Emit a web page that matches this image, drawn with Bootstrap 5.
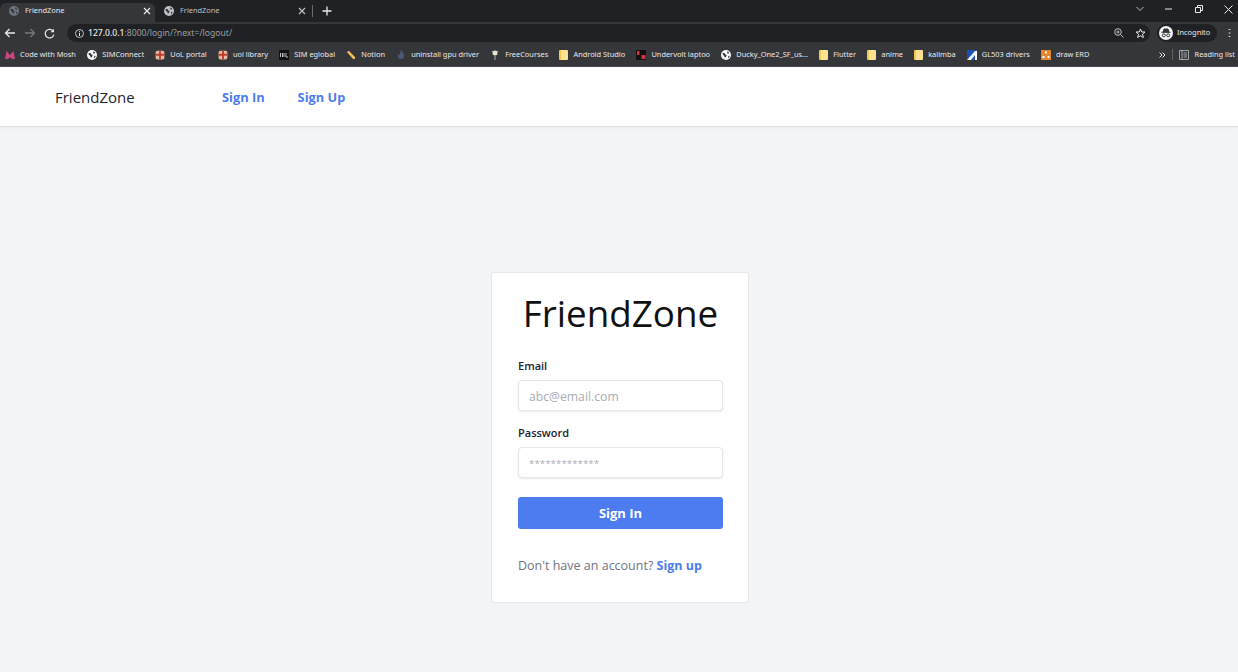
<!DOCTYPE html>
<html lang="en">
<head>
<meta charset="UTF-8">
<meta name="viewport" content="width=device-width, initial-scale=1.0">
<title>FriendZone</title>
<link href="https://cdn.jsdelivr.net/npm/bootstrap@5.3.0/dist/css/bootstrap.min.css" rel="stylesheet">
<style>
body { background: #f3f4f6; font-family: "Open Sans", "Noto Sans", sans-serif; overflow: hidden; height: 672px; }
svg { display: block; flex: none; }

/* browser frame */
.br-frame { background: #35363a; color: #e8eaed; font-family: "Noto Sans", sans-serif; font-size: 7.4px; height: 67px; border-bottom: 1px solid #4a4b4e; }
.br-tabs { background: #202124; height: 22px; padding-top: 3px; }
.br-tab { width: 155px; height: 19px; padding: 0 4px 3px 9px; color: #e8eaed; }
.br-tab-on { background: #35363a; border-radius: 6px 6px 0 0; }
.br-tab-off { color: #bdc1c6; }
.br-tab-name { margin-left: 6px; flex: 1; }
.br-newtab { padding-bottom: 3px; }
.br-sep { width: 1px; height: 12px; background: #6a6b6e; margin: 0 9px 0 2px; }
.br-win { width: 102px; height: 19px; padding: 0 5px 7px 0; }
.br-toolbar { height: 22px; padding: 0 4px; }
.br-address { background: #202124; border-radius: 11px; height: 18px; width: 1083px; margin-left: 12px; padding: 0 4px 0 8px; font-size: 8.6px; color: #9aa0a6; }
.br-address b { color: #e8eaed; font-weight: 500; }
.br-star { margin-left: 11px; }
.br-incog { background: #202124; border-radius: 10px; height: 18px; width: 60px; margin-left: 7px; padding-left: 2px; }
.br-dots { margin-left: 11px; }
.br-marks { height: 22px; padding: 0 3px 0 5px; gap: 11.2px; white-space: nowrap; }
.br-mark { gap: 5px; }
.br-ico { width: 10px; height: 10px; flex: none; }
.br-folder { width: 9px; height: 10px; flex: none; background: #fde293; border-radius: 1px; border-left: 2px solid #f5c84c; }
.br-more { margin-left: auto; gap: 6px; }
.br-vline { width: 1px; height: 11px; background: #5f6368; }

/* site */
.fz-nav { background: #fff; height: 60px; border-bottom: 1px solid #e2e3e6; box-shadow: 0 1px 2px rgba(0,0,0,.04); padding: 2px 0 0 55px; }
.fz-brand { color: #1f2330; font-size: 15px; width: 167px; margin: 0; padding: 0; }
.fz-link { color: #4c7cf0; font-weight: 700; font-size: 12.8px; padding: 0; margin-right: 33px; }
.fz-link:hover, .fz-signup:hover { color: #3a66d4; }
.fz-main { padding: 145px 0 0 2px; }
.fz-card { width: 258px; height: 331px; border: 1px solid #e4e6ea; border-radius: 3px; padding: 0 25px 0 26px; }
.fz-title { font-size: 36.8px; font-weight: 400; color: #111; text-align: center; margin: 15px 0 20px; line-height: 50px; white-space: nowrap; }
.fz-label { color: #1a1c33; font-size: 11px; font-weight: 600; margin: 0 0 6px; line-height: 16px; display: block; }
.fz-input { height: 31px; border: 1px solid #e5e7eb; border-radius: 4px; box-shadow: 0 1px 2px rgba(0,0,0,.09); font-size: 12.2px; padding: 1px 10px 0; margin-bottom: 14px; }
.fz-input::placeholder { color: #a8acb5; }
.fz-stars { font-size: 9.8px; }
.fz-btn { background: #4c7cf0; border: 0; border-radius: 3px; height: 32px; font-size: 13px; font-weight: 700; padding: 1px 0 0; margin-top: 5px; }
.fz-foot { color: #6f7480; font-size: 12.5px; margin: 27px 0 0; line-height: 20px; white-space: nowrap; }
.fz-signup { color: #4c7cf0; font-weight: 700; text-decoration: none; }
</style>
</head>
<body>

<svg width="0" height="0" class="position-absolute">
  <symbol id="globe" viewBox="0 0 16 16">
    <circle cx="8" cy="8" r="8" fill="currentColor"/>
    <path d="M3 4.500l3 .5 1 2 2 1-1 3-2 1-1-3-2.500-2zM10 2l3 2-1 2-2-1zM12 9l2 .5-2 3.500-1-1z" fill="#35363a"/>
  </symbol>
  <symbol id="uol" viewBox="0 0 16 16">
    <rect x="1" y="1" width="14" height="14" rx="3" fill="#e8b9a0"/>
    <path d="M1 6h14v3H1zM6.500 1h3v14h-3z" fill="#b8402c"/>
  </symbol>
</svg>

<!-- barra do navegador -->
<header class="br-frame">
  <div class="br-tabs d-flex align-items-stretch">
    <div class="br-tab br-tab-on d-flex align-items-center">
      <svg width="10" height="10" class="text-secondary"><use href="#globe"/></svg>
      <span class="br-tab-name">FriendZone</span>
      <svg width="8" height="8" viewBox="0 0 8 8"><path d="M1 1l6 6M7 1L1 7" stroke="#e8eaed" stroke-width="1.200"/></svg>
    </div>
    <div class="br-tab br-tab-off d-flex align-items-center">
      <svg width="10" height="10"><use href="#globe"/></svg>
      <span class="br-tab-name">FriendZone</span>
      <svg width="8" height="8" viewBox="0 0 8 8"><path d="M1 1l6 6M7 1L1 7" stroke="#bdc1c6" stroke-width="1.200"/></svg>
    </div>
    <div class="br-newtab d-flex align-items-center flex-grow-1">
      <span class="br-sep"></span>
      <svg width="10" height="10" viewBox="0 0 10 10"><path d="M5 .5v9M.5 5h9" stroke="#e8eaed" stroke-width="1.300"/></svg>
    </div>
    <div class="br-win d-flex align-items-center justify-content-between">
      <svg width="8" height="6" viewBox="0 0 8 6"><path d="M.5 1L4 4.500 7.500 1" fill="none" stroke="#bdc1c6"/></svg>
      <svg width="8" height="8" viewBox="0 0 8 8"><path d="M0 4h7" stroke="#e8eaed"/></svg>
      <svg width="8" height="8" viewBox="0 0 8 8"><path d="M.5 2.500h5v5h-5zM2.500 2V.5h5v5H6" fill="none" stroke="#e8eaed"/></svg>
      <svg width="9" height="9" viewBox="0 0 9 9"><path d="M.5.5l8 8M8.500.5l-8 8" stroke="#e8eaed"/></svg>
    </div>
  </div>
  <div class="br-toolbar d-flex align-items-center">
    <svg width="12" height="10" viewBox="0 0 12 10"><path d="M11 5H2M5.500 1L1.500 5l4 4" fill="none" stroke="#e8eaed" stroke-width="1.300"/></svg>
    <svg width="12" height="10" viewBox="0 0 12 10" class="ms-2"><path d="M1 5h9M6.500 1l4 4-4 4" fill="none" stroke="#77797d" stroke-width="1.300"/></svg>
    <svg width="11" height="11" viewBox="0 0 11 11" class="ms-2"><path d="M9.300 3.500A4.300 4.300 0 1 0 9.800 6.500" fill="none" stroke="#e8eaed" stroke-width="1.200"/><path d="M10 .8v3.500H6.500z" fill="#e8eaed"/></svg>
    <div class="br-address d-flex align-items-center">
      <svg width="9" height="9" viewBox="0 0 9 9"><circle cx="4.500" cy="4.500" r="4" fill="none" stroke="#e8eaed" stroke-width=".8"/><path d="M4.500 2v.9M4.500 3.800V7" stroke="#e8eaed"/></svg>
      <span class="ms-1"><b>127.0.0.1</b>:8000/login/?next=/logout/</span>
      <svg width="10" height="10" viewBox="0 0 10 10" class="ms-auto"><circle cx="4" cy="4" r="3.300" fill="none" stroke="#bdc1c6"/><path d="M6.500 6.500L9.500 9.500M2.500 4h3M4 2.500v3" stroke="#bdc1c6"/></svg>
      <svg width="11" height="11" viewBox="0 0 11 11" class="br-star"><path d="M5.500 1l1.300 3h3.200L7.500 6.200l.9 3.300-2.900-1.800-2.900 1.800.9-3.300L1 4h3.200z" fill="none" stroke="#e8eaed"/></svg>
    </div>
    <div class="br-incog d-flex align-items-center">
      <svg width="14" height="14" viewBox="0 0 14 14"><circle cx="7" cy="7" r="7" fill="#f1f3f4"/><path d="M4 6l1-3h4l1 3zM2.500 6.300h9" stroke="#35363a" fill="#35363a"/><circle cx="4.800" cy="9.300" r="1.500" fill="none" stroke="#35363a"/><circle cx="9.200" cy="9.300" r="1.500" fill="none" stroke="#35363a"/></svg>
      <span class="ms-1">Incognito</span>
    </div>
    <svg width="3" height="10" viewBox="0 0 3 10" class="br-dots"><path d="M1.500 1v1M1.500 4.500v1M1.500 8v1" stroke="#e8eaed" stroke-width="1.600"/></svg>
  </div>
  <div class="br-marks d-flex align-items-center">
    <span class="br-mark d-flex align-items-center"><svg class="br-ico" viewBox="0 0 10 10"><path d="M0 9l1.500-8L5 5l3.500-4L10 9H7L5 7 3 9z" fill="#c8477e"/></svg>Code with Mosh</span>
    <span class="br-mark d-flex align-items-center"><svg class="br-ico text-light"><use href="#globe"/></svg>SIMConnect</span>
    <span class="br-mark d-flex align-items-center"><svg class="br-ico"><use href="#uol"/></svg>UoL portal</span>
    <span class="br-mark d-flex align-items-center"><svg class="br-ico"><use href="#uol"/></svg>uol library</span>
    <span class="br-mark d-flex align-items-center"><svg class="br-ico" viewBox="0 0 10 10"><rect width="10" height="10" fill="#111"/><path d="M1.500 3v4M3.500 3v4M5 3v4M7 3v4h2" stroke="#eee" stroke-width=".8"/></svg>SIM eglobal</span>
    <span class="br-mark d-flex align-items-center"><svg class="br-ico" viewBox="0 0 10 10"><path d="M1 2l2-1 6 6v2H7z" fill="#f2c14e"/><path d="M1 2l2-1 1 1-2 1z" fill="#e8a0a0"/></svg>Notion</span>
    <span class="br-mark d-flex align-items-center"><svg class="br-ico" viewBox="0 0 10 10"><path d="M5 0c1 2 3 3 3 6a3 3 0 0 1-6 0c0-1 .5-2 1-2.500 0 1 .5 1.500 1 1.500C4 3 4.500 1.500 5 0z" fill="#4a5a78"/></svg>uninstall gpu driver</span>
    <span class="br-mark d-flex align-items-center"><svg class="br-ico" viewBox="0 0 10 10"><circle cx="5" cy="3" r="2.500" fill="#e8e4c8"/><path d="M4.500 5.500h1V10h-1z" fill="#aaa"/><path d="M2 1l1 1M8 1L7 2" stroke="#6cc"/></svg>FreeCourses</span>
    <span class="br-mark d-flex align-items-center"><span class="br-folder"></span>Android Studio</span>
    <span class="br-mark d-flex align-items-center"><svg class="br-ico" viewBox="0 0 10 10"><rect width="10" height="10" fill="#111"/><path d="M1 1v4h2.500V1M5.500 5h4v4h-4z" fill="#d8323c"/></svg>Undervolt laptoo</span>
    <span class="br-mark d-flex align-items-center"><svg class="br-ico text-light"><use href="#globe"/></svg>Ducky_One2_SF_us...</span>
    <span class="br-mark d-flex align-items-center"><span class="br-folder"></span>Flutter</span>
    <span class="br-mark d-flex align-items-center"><span class="br-folder"></span>anime</span>
    <span class="br-mark d-flex align-items-center"><span class="br-folder"></span>kalimba</span>
    <span class="br-mark d-flex align-items-center"><svg class="br-ico" viewBox="0 0 10 10"><rect width="10" height="10" fill="#1d4fb8"/><path d="M0 10L8 1h2v9H8V5l-4 5z" fill="#fff"/></svg>GL503 drivers</span>
    <span class="br-mark d-flex align-items-center"><svg class="br-ico" viewBox="0 0 10 10"><rect width="10" height="10" fill="#e0862e"/><path d="M4 1.500h2v2H4zM1.500 6h2v2h-2zM6.500 6h2v2h-2z" fill="#fff"/></svg>draw ERD</span>
    <span class="br-more d-flex align-items-center">
      <svg width="7" height="6" viewBox="0 0 7 6"><path d="M.5.5L3 3 .5 5.500M3.500.5L6 3 3.500 5.500" fill="none" stroke="#e8eaed"/></svg>
      <span class="br-vline"></span>
      <svg class="br-ico" viewBox="0 0 10 10"><path d="M.5.5h9v9h-9zM3 .5v9M4.500 3H8M4.500 5H8M4.500 7H8" fill="none" stroke="#bdc1c6" stroke-width=".8"/></svg>
      <span>Reading list</span>
    </span>
  </div>
</header>

<!-- pagina -->
<nav class="navbar fz-nav">
  <div class="d-flex align-items-center">
    <a class="navbar-brand fz-brand" href="#">FriendZone</a>
    <a class="nav-link fz-link" href="#">Sign In</a>
    <a class="nav-link fz-link" href="#">Sign Up</a>
  </div>
</nav>

<main class="fz-main d-flex justify-content-center">
  <div class="card fz-card">
    <h1 class="fz-title">FriendZone</h1>
    <form>
      <label class="fz-label" for="email">Email</label>
      <input class="form-control fz-input" id="email" type="email" placeholder="abc@email.com">
      <label class="fz-label" for="senha">Password</label>
      <input class="form-control fz-input fz-stars" id="senha" type="password" placeholder="*************">
      <button class="btn btn-primary fz-btn w-100" type="button">Sign In</button>
    </form>
    <p class="fz-foot">Don't have an account? <a class="fz-signup" href="#">Sign up</a></p>
  </div>
</main>

<script src="https://cdn.jsdelivr.net/npm/bootstrap@5.3.0/dist/js/bootstrap.bundle.min.js"></script>
</body>
</html>
